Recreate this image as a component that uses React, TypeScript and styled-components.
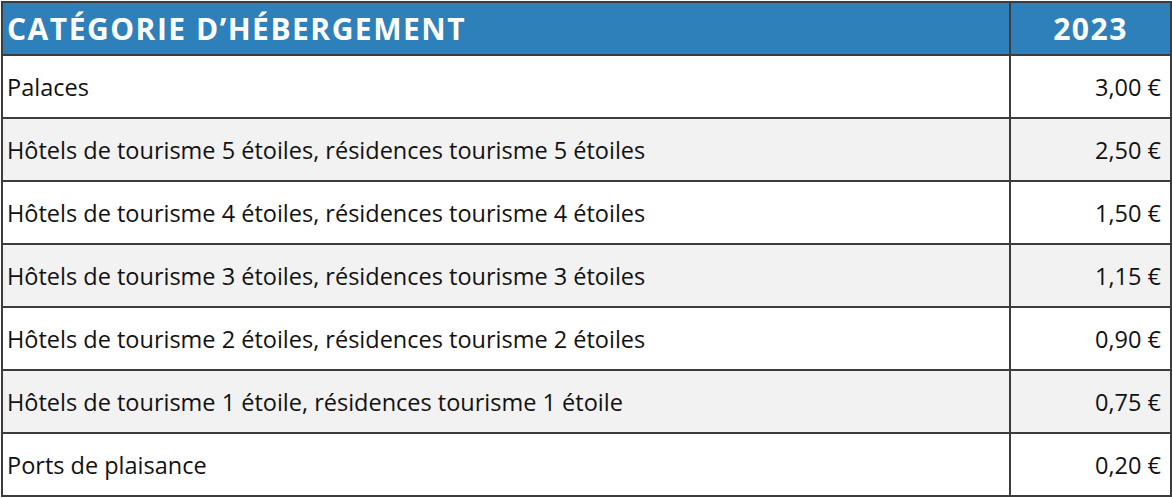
import styled, { createGlobalStyle } from "styled-components";

const GlobalStyle = createGlobalStyle`
  body {
    margin: 0;
    background: #ffffff;
    font-family: "Open Sans", "Liberation Sans", sans-serif;
  }
`;

const Wrap = styled.div`
  padding: 1px 2px 0 1px;
  width: 1172px;
  box-sizing: border-box;
`;

const Table = styled.table`
  width: 1169px;
  border-collapse: collapse;
  table-layout: fixed;
  color: #111111;
`;

const HeadCell = styled.th<{ $align?: "left" | "center" }>`
  background: #2e80ba;
  color: #ffffff;
  font-family: "Open Sans", "Liberation Sans", sans-serif;
  font-weight: 700;
  font-size: 30px;
  letter-spacing: 1.5px;
  height: 51px;
  padding: 0 0 0 4px;
  text-align: ${(p) => p.$align ?? "left"};
  border: 2px solid #3c3c3c;
  ${(p) => p.$align === "center" && "padding: 0;"}
`;

const Row = styled.tr<{ $shade: boolean }>`
  background: ${(p) => (p.$shade ? "#f2f2f2" : "#ffffff")};
`;

const Cell = styled.td<{ $num?: boolean }>`
  height: 61px;
  font-size: 23.5px;
  padding: ${(p) => (p.$num ? "0 9px 0 0" : "0 0 0 4px")};
  text-align: ${(p) => (p.$num ? "right" : "left")};
  border: 2px solid #3c3c3c;
  white-space: nowrap;
`;

const rows = [
  ["Palaces", "3,00 €"],
  ["Hôtels de tourisme 5 étoiles, résidences tourisme 5 étoiles", "2,50 €"],
  ["Hôtels de tourisme 4 étoiles, résidences tourisme 4 étoiles", "1,50 €"],
  ["Hôtels de tourisme 3 étoiles, résidences tourisme 3 étoiles", "1,15 €"],
  ["Hôtels de tourisme 2 étoiles, résidences tourisme 2 étoiles", "0,90 €"],
  ["Hôtels de tourisme 1 étoile, résidences tourisme 1 étoile", "0,75 €"],
  ["Ports de plaisance", "0,20 €"],
];

const App = () => {
  return (
    <>
      <GlobalStyle />
      <Wrap>
        <Table>
          <colgroup>
            <col style={{ width: 1008 }} />
            <col style={{ width: 161 }} />
          </colgroup>
          <thead>
            <tr>
              <HeadCell>CATÉGORIE D’HÉBERGEMENT</HeadCell>
              <HeadCell $align="center">2023</HeadCell>
            </tr>
          </thead>
          <tbody>
            {rows.map(([label, price], i) => (
              <Row key={label} $shade={i % 2 === 1}>
                <Cell>{label}</Cell>
                <Cell $num>{price}</Cell>
              </Row>
            ))}
          </tbody>
        </Table>
      </Wrap>
    </>
  );
};

export default App;
